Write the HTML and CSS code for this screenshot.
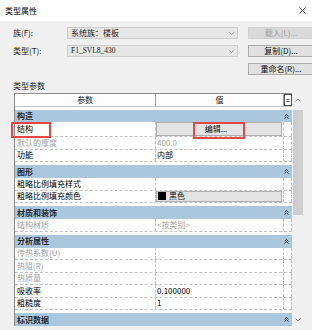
FILE: index.html
```html
<!DOCTYPE html>
<html lang="zh-CN">
<head>
  <meta charset="UTF-8">
  <title>类型属性</title>
  <link rel="stylesheet" href="styles.css">
</head>
<body>
  <div class="titlebar">
    <span class="title">类型属性</span>
    <svg class="close" width="7" height="7" viewBox="0 0 7 7"><path d="M0.5 0.5L6.5 6.5M6.5 0.5L0.5 6.5" stroke="#444" stroke-width="0.9" fill="none"/></svg>
  </div>

  <div class="content">
    <div class="type-form">
      <label>族(F):</label>
      <div class="combo"><span>系统族：楼板</span><svg width="5" height="3" viewBox="0 0 5 3"><path d="M0.3 0.3L2.5 2.5L4.7 0.3" stroke="#888" stroke-width="0.8" fill="none"/></svg></div>
      <div class="btn disabled">载入(L)...</div>

      <label>类型(T):</label>
      <div class="combo"><span class="type-name">F1_SVL8_430</span><svg width="5" height="3" viewBox="0 0 5 3"><path d="M0.3 0.3L2.5 2.5L4.7 0.3" stroke="#888" stroke-width="0.8" fill="none"/></svg></div>
      <div class="btn">复制(D)...</div>

      <div class="btn rename">重命名(R)...</div>
    </div>

    <div class="section-label">类型参数</div>

    <div class="params">
      <div class="ptable">
        <div class="prow head">
          <div class="cell">参数</div>
          <div class="cell">值</div>
          <div class="cell eq">=</div>
        </div>

        <div class="group first"><span>构造</span><svg width="5" height="5" viewBox="0 0 5 5"><path d="M0.5 2.3L2.5 0.5L4.5 2.3M0.5 4.5L2.5 2.7L4.5 4.5" stroke="#333" stroke-width="0.9" fill="none"/></svg></div>
        <div class="prow tall marked">
          <div class="cell">结构</div>
          <div class="cell"><div class="cell-btn center">编辑...</div></div>
          <div class="cell"></div>
          <span class="callout callout-label"></span>
          <span class="callout callout-edit"></span>
        </div>
        <div class="prow muted">
          <div class="cell">默认的厚度</div>
          <div class="cell">400.0</div>
          <div class="cell"></div>
        </div>
        <div class="prow">
          <div class="cell">功能</div>
          <div class="cell">内部</div>
          <div class="cell"></div>
        </div>

        <div class="group"><span>图形</span><svg width="5" height="5" viewBox="0 0 5 5"><path d="M0.5 2.3L2.5 0.5L4.5 2.3M0.5 4.5L2.5 2.7L4.5 4.5" stroke="#333" stroke-width="0.9" fill="none"/></svg></div>
        <div class="prow">
          <div class="cell">粗略比例填充样式</div>
          <div class="cell"></div>
          <div class="cell"></div>
        </div>
        <div class="prow">
          <div class="cell">粗略比例填充颜色</div>
          <div class="cell"><div class="cell-btn"><span class="swatch"></span>黑色</div></div>
          <div class="cell"></div>
        </div>

        <div class="group"><span>材质和装饰</span><svg width="5" height="5" viewBox="0 0 5 5"><path d="M0.5 2.3L2.5 0.5L4.5 2.3M0.5 4.5L2.5 2.7L4.5 4.5" stroke="#333" stroke-width="0.9" fill="none"/></svg></div>
        <div class="prow muted">
          <div class="cell">结构材质</div>
          <div class="cell">&lt;按类别&gt;</div>
          <div class="cell"></div>
        </div>

        <div class="group"><span>分析属性</span><svg width="5" height="5" viewBox="0 0 5 5"><path d="M0.5 2.3L2.5 0.5L4.5 2.3M0.5 4.5L2.5 2.7L4.5 4.5" stroke="#333" stroke-width="0.9" fill="none"/></svg></div>
        <div class="prow muted">
          <div class="cell">传热系数(U)</div>
          <div class="cell"></div>
          <div class="cell"></div>
        </div>
        <div class="prow muted">
          <div class="cell">热阻(R)</div>
          <div class="cell"></div>
          <div class="cell"></div>
        </div>
        <div class="prow muted">
          <div class="cell">热质量</div>
          <div class="cell"></div>
          <div class="cell"></div>
        </div>
        <div class="prow">
          <div class="cell">吸收率</div>
          <div class="cell">0.100000</div>
          <div class="cell"></div>
        </div>
        <div class="prow">
          <div class="cell">粗糙度</div>
          <div class="cell">1</div>
          <div class="cell"></div>
        </div>

        <div class="group"><span>标识数据</span><svg width="5" height="5" viewBox="0 0 5 5"><path d="M0.5 2.3L2.5 0.5L4.5 2.3M0.5 4.5L2.5 2.7L4.5 4.5" stroke="#333" stroke-width="0.9" fill="none"/></svg></div>
      </div>

      <div class="vscroll">
        <div class="arrow"><svg width="6" height="4" viewBox="0 0 6 4"><path d="M0.5 3.5L3 1L5.5 3.5" stroke="#777" stroke-width="0.9" fill="none"/></svg></div>
        <div class="track"><div class="thumb"></div></div>
        <div class="arrow"><svg width="6" height="4" viewBox="0 0 6 4"><path d="M0.5 0.5L3 3L5.5 0.5" stroke="#777" stroke-width="0.9" fill="none"/></svg></div>
      </div>
    </div>
  </div>
</body>
</html>
```

FILE: styles.css
```css
* {
  box-sizing: border-box;
}

body {
  margin: 0;
  width: 312px;
  height: 330px;
  overflow: hidden;
  background: #f0f0f0;
  color: #000;
  font-family: "Noto Sans CJK SC", "Liberation Sans", sans-serif;
  font-size: 8px;
  line-height: 1;
}

.titlebar {
  height: 21px;
  background: #fff;
  display: flex;
  align-items: center;
  justify-content: space-between;
  padding: 0 6px 0 5px;
}

.content {
  padding: 6px 8px 0 13px;
}

.type-form {
  display: grid;
  grid-template-columns: 44px 171px 66px;
  grid-auto-rows: 12px;
  column-gap: 10px;
  row-gap: 6px;
}

.type-form label {
  display: flex;
  align-items: center;
  color: #222;
}

.combo {
  display: flex;
  align-items: center;
  justify-content: space-between;
  background: #e6e6e6;
  border: 1px solid #cfcfcf;
  padding: 0 3px 0 3px;
  color: #222;
}

.type-name {
  font-family: "Liberation Serif", serif;
  font-size: 7.5px;
}

.btn {
  display: flex;
  align-items: center;
  justify-content: center;
  background: #e1e1e1;
  border: 1px solid #adadad;
  color: #111;
}

.btn.disabled {
  background: #d9d9d9;
  border-color: #d2d2d2;
  color: #a0a0a0;
}

.btn.rename {
  grid-column: 3;
}

.section-label {
  margin: 5px 0 2px;
  height: 11px;
  display: flex;
  align-items: center;
  color: #222;
}

.params {
  display: flex;
  margin-left: 1px;
}

.ptable {
  width: 278px;
  background: #fff;
  border-left: 1px solid #8a8a8a;
}

.prow {
  display: grid;
  grid-template-columns: 141px 128px 8px;
  height: 12.5px;
  border-bottom: 1px dashed #c4c4c4;
}

.prow .cell {
  display: flex;
  align-items: center;
  padding-left: 1px;
  border-right: 1px dashed #c4c4c4;
  white-space: nowrap;
  overflow: hidden;
}

.prow .cell:first-child {
  padding-left: 2px;
}

.prow.head {
  height: 14px;
  border-top: 1px solid #8a8a8a;
  border-bottom: 1px solid #c8c8c8;
  background: #fdfdfd;
}

.prow.head .cell {
  justify-content: center;
  padding: 0;
  border-right: 1px solid #9a9a9a;
  color: #222;
}

.prow.head .eq {
  border: 1px solid #555;
  font-size: 8px;
}

.prow.tall {
  height: 15px;
}

.prow.muted .cell {
  color: #a4a4a4;
}

.marked {
  position: relative;
}

.callout {
  position: absolute;
  border: 2px solid #e34848;
}

.callout-label {
  left: -4px;
  top: 0;
  width: 40px;
  height: 16px;
}

.callout-edit {
  left: 178px;
  top: 0;
  width: 52px;
  height: 17px;
}

.cell-btn {
  display: flex;
  align-items: center;
  width: 100%;
  height: 100%;
  margin-left: -1px;
  background: #e3e3e3;
  border: 1px solid #b0b0b0;
  color: #111;
}

.cell-btn.center {
  justify-content: center;
  padding-right: 6px;
}

.swatch {
  width: 8px;
  height: 8px;
  margin: 0 3px 0 1px;
  background: #000;
}

.group {
  display: flex;
  align-items: center;
  justify-content: space-between;
  height: 16px;
  padding: 0 3px 0 2px;
  background: #abc7de;
  border-top: 3px solid #fff;
  font-weight: bold;
  color: #2a2a2a;
}

.group.first {
  height: 15px;
}

.vscroll {
  width: 12px;
  display: flex;
  flex-direction: column;
  background: #f0f0f0;
}

.arrow {
  height: 13px;
  display: flex;
  align-items: center;
  justify-content: center;
}

.track {
  flex: 1;
  padding: 4px 1px 0 1px;
}

.thumb {
  height: 105px;
  background: #cdcdcd;
}
```
